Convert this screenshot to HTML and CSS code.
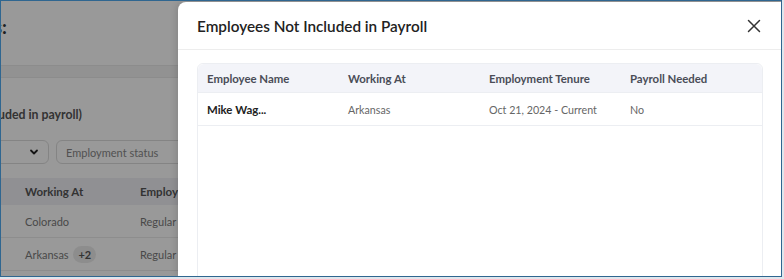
FILE: index.html
```html
<!DOCTYPE html>
<html lang="en">
<head>
  <meta charset="UTF-8" />
  <meta name="viewport" content="width=device-width, initial-scale=1.0"/>
  <title>Employees Not Included in Payroll</title>
  <link rel="stylesheet" href="styles.css">
</head>
<body>
  <div class="frame">
    <div class="page">
      <div class="top"><h2 class="page-title">Payroll Details:</h2></div>
      <div class="band"></div>
      <div class="heading">Employees (not included in payroll)</div>

      <div class="controls">
        <div class="select">
          <span>Location</span>
          <svg width="10" height="10" viewBox="0 0 10 10"><path d="M2 3.5 L5 6.5 L8 3.5" fill="none" stroke="#222" stroke-width="1.8" stroke-linecap="round" stroke-linejoin="round"/></svg>
        </div>
        <div class="select status"><span>Employment status</span></div>
      </div>

      <div class="bg-table">
        <div class="bg-row bg-head">
          <div>Employee Name</div>
          <div>Working At</div>
          <div>Employment Type</div>
        </div>
        <div class="bg-row">
          <div>Jane Cooper</div>
          <div>Colorado</div>
          <div>Regular</div>
        </div>
        <div class="bg-row">
          <div>Mike Wagner</div>
          <div>Arkansas <span class="more">+2</span></div>
          <div>Regular</div>
        </div>
      </div>
    </div>

    <div class="overlay"></div>

    <div class="modal">
      <div class="modal-header">
        <h3>Employees Not Included in Payroll</h3>
        <svg class="close" width="14" height="14" viewBox="0 0 14 14"><path d="M1.5 1.5 L12.5 12.5 M12.5 1.5 L1.5 12.5" stroke="#333" stroke-width="1.5" stroke-linecap="round"/></svg>
      </div>
      <div class="modal-body">
        <div class="table">
          <div class="row head">
            <div>Employee Name</div>
            <div>Working At</div>
            <div>Employment Tenure</div>
            <div>Payroll Needed</div>
          </div>
          <div class="row">
            <div class="name">Mike Wag...</div>
            <div>Arkansas</div>
            <div>Oct 21, 2024 - Current</div>
            <div>No</div>
          </div>
        </div>
      </div>
    </div>
  </div>
</body>
</html>
```

FILE: styles.css
```css
body {
  margin: 0;
  background: #dfe6ec;
  font-family: Lato, "Noto Sans", sans-serif;
}
.frame {
  position: relative;
  width: 780px;
  height: 275px;
  border: 1px solid #2f6690;
  background: #fff;
  overflow: hidden;
}

/* page behind the dialog */
.page {
  margin-left: -200px;
  width: 600px;
}
.top {
  height: 64px;
  width: 206px;
  text-align: right;
}
.page-title {
  margin: 0;
  padding-top: 14px;
  font-size: 19px;
  line-height: 24px;
  font-weight: 700;
  color: #333;
  white-space: nowrap;
}
.band {
  height: 11px;
  background: #f4f4f4;
  border-top: 1px solid #eaeaea;
  border-bottom: 1px solid #eaeaea;
}
.heading {
  width: 281px;
  margin-top: 27px;
  text-align: right;
  font-size: 12.3px;
  line-height: 20px;
  font-weight: 700;
  color: #555;
  white-space: nowrap;
}
.controls {
  display: flex;
  gap: 7px;
  margin-top: 15px;
  padding-left: 16px;
}
.select {
  box-sizing: border-box;
  height: 24px;
  width: 232px;
  border: 1px solid #ddd;
  border-radius: 6px;
  display: flex;
  align-items: center;
  justify-content: space-between;
  padding: 0 9px;
  font-size: 11px;
  color: #888;
}
.select.status {
  width: 200px;
}
.bg-table {
  margin-top: 14px;
}
.bg-row {
  display: grid;
  grid-template-columns: 212px 115px 1fr;
  height: 32px;
  align-items: center;
  border-bottom: 1px solid #ececec;
  font-size: 11px;
  color: #7a7a7a;
}
.bg-row div {
  padding-left: 12px;
  white-space: nowrap;
}
.bg-row.bg-head {
  height: 27px;
  background: #f0f1f5;
  font-weight: 700;
  font-size: 11.5px;
  color: #555;
  border-bottom: none;
}
.more {
  display: inline-block;
  margin-left: 2px;
  padding: 2px 5px;
  border-radius: 10px;
  background: #ececec;
  color: #555;
  font-weight: 700;
  font-size: 11px;
}

.overlay {
  position: absolute;
  inset: 0;
  background: rgba(0, 0, 0, 0.4);
}

/* dialog */
.modal {
  position: absolute;
  top: 1px;
  left: 177px;
  right: 0;
  bottom: 0;
  background: #fff;
  border-top-left-radius: 8px;
  box-shadow: -2px 0 6px rgba(0, 0, 0, 0.12);
}
.modal-header {
  height: 47px;
  display: flex;
  align-items: center;
  justify-content: space-between;
  padding: 0 20px 0 19px;
  border-bottom: 1px solid #ededed;
}
.modal-header h3 {
  margin: 0;
  font-size: 15.3px;
  font-weight: 600;
  color: #222;
}
.modal-body {
  padding: 13px 18px 0 19px;
}
.table {
  border: 1px solid #eceef2;
  border-radius: 6px;
  height: 260px;
}
.row {
  display: grid;
  grid-template-columns: repeat(4, 1fr);
  height: 32px;
  align-items: center;
  border-bottom: 1px solid #eceef2;
  font-size: 10.7px;
  color: #666;
}
.row div {
  padding-left: 9px;
  white-space: nowrap;
}
.row.head {
  height: 28px;
  background: #f3f4f9;
  border-radius: 6px 6px 0 0;
  font-size: 11.4px;
  font-weight: 700;
  color: #4a4d57;
}
.row .name {
  font-size: 11.4px;
  font-weight: 700;
  color: #222;
}
```
